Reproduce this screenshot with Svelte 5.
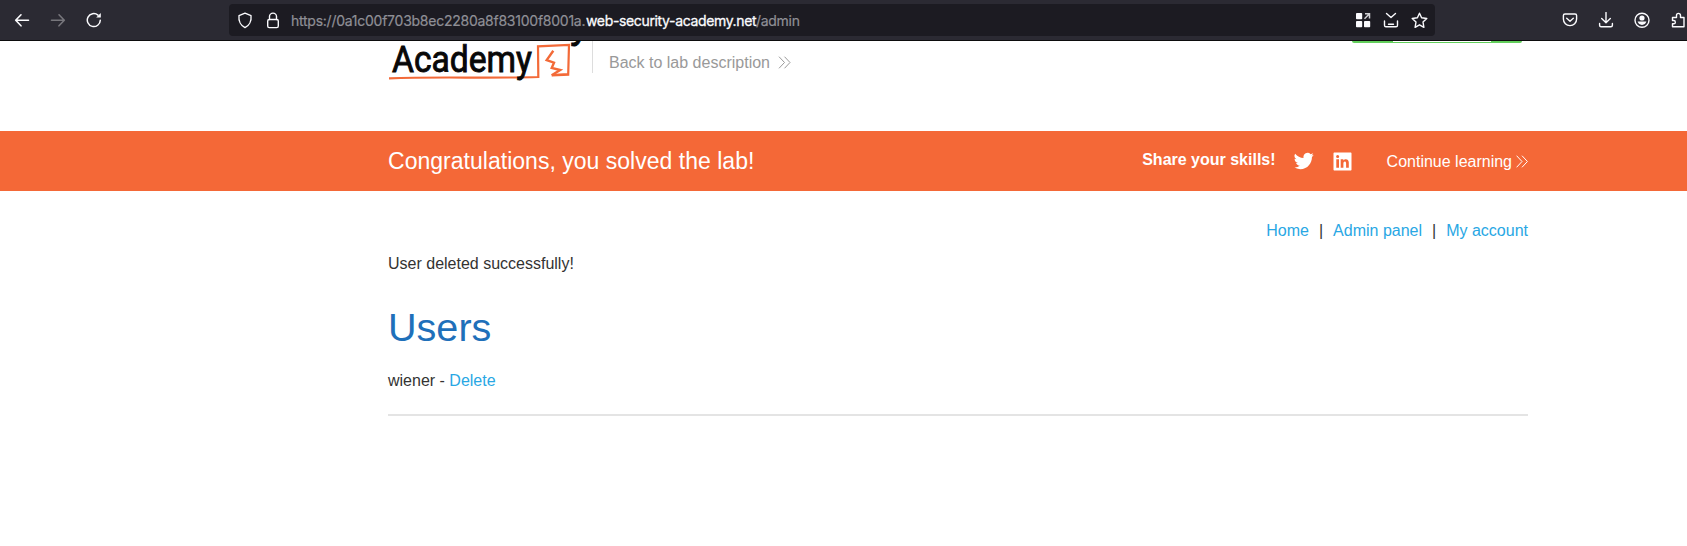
<script>
  const links = ['Home', 'Admin panel', 'My account'];
</script>

<div class="window">
  <header class="toolbar">
    <nav class="history">
      <svg width="16" height="16" viewBox="0 0 16 16" class="line"><path d="M14.5 8.3H2M7 2.8 1.7 8.3 7 13.8" stroke-width="1.6" /></svg>
      <svg width="16" height="16" viewBox="0 0 16 16" class="line dim"><path d="M1.5 8.3H14M9 2.8l5.3 5.5L9 13.8" stroke-width="1.6" /></svg>
      <svg width="16" height="16" viewBox="0 0 16 16" class="line"><path d="M14.3 8.2A6.5 6.5 0 1 1 12 3.1" stroke-width="1.5" /><path d="M14.8 1v4.5h-4.6z" fill="#fbfbfe" stroke="none" /></svg>
    </nav>
    <div class="address">
      <svg width="16" height="17" viewBox="0 0 16 17" class="line shield"><path d="M8 1.2 14 3.6C14.7 9 12 13.6 8 15.6 4 13.6 1.3 9 2 3.6z" /></svg>
      <svg width="14" height="17" viewBox="0 0 14 17" class="line lock"><path d="M3.5 7.5V4.6a3.5 3.5 0 0 1 7 0v2.9" /><rect x="1.7" y="7.5" width="10.6" height="8.1" rx="1.6" /></svg>
      <div class="url"><span class="host">https://0a1c00f703b8ec2280a8f83100f8001a.</span><span class="domain">web-security-academy.net</span><span class="path">/admin</span></div>
      <div class="actions">
        <svg width="16" height="16" viewBox="0 0 16 16" fill="#fbfbfe"><rect x="1" y="1" width="6.2" height="6.2" rx=".8" /><rect x="1" y="9" width="6.2" height="6.2" rx=".8" /><rect x="9" y="9" width="6.2" height="6.2" rx=".8" /><path d="M9.500 6.800 14 2.300M10 1.800h4.500v4.800" fill="none" stroke="#d0d0d4" stroke-width="1.5" /></svg>
        <svg width="16" height="16" viewBox="0 0 16 16" class="line"><path d="m3.500 1.500 4.500 4 4.500-4M1.500 9v4.200c0 .9.600 1.600 1.500 1.600h10c.9 0 1.500-.7 1.500-1.600V9M5.500 12.200h5" /></svg>
        <svg width="17" height="17" viewBox="0 0 17 17" class="line"><path d="m8.500 1.200 2.100 4.600 5.200.7-3.800 3.500.9 5.300-4.400-2.500-4.400 2.500.9-5.300L1.200 6.500l5.200-.7z" /></svg>
      </div>
    </div>
    <div class="tools">
      <svg width="16" height="16" viewBox="0 0 16 16" class="line"><path d="M3 2h10c1 0 1.600.6 1.600 1.600V7c0 4-2.900 6.600-6.600 6.600S1.400 11 1.400 7V3.600C1.400 2.600 2 2 3 2zM4.700 6.300 8 9.300l3.300-3" /></svg>
      <svg width="16" height="16" viewBox="0 0 16 16" class="line"><path d="M8 .5v10M3.700 6.400 8 10.700l4.300-4.300M1.600 11.500v1.700c0 .9.600 1.500 1.500 1.500h9.800c.9 0 1.500-.6 1.500-1.500v-1.700" /></svg>
      <svg width="16" height="16" viewBox="0 0 16 16" class="line"><circle cx="8" cy="8.200" r="7" /><circle cx="8" cy="6" r="2.600" fill="#fbfbfe" stroke="none" /><path d="M3.600 9.600h8.800c-.5 2-2.200 3.300-4.400 3.300S4.100 11.600 3.600 9.600z" fill="#fbfbfe" stroke="none" /></svg>
      <svg width="16" height="16" viewBox="0 0 16 16" class="line"><path d="M2.500 14.800h11.500V5.500H10.500V3.400a2 2 0 0 0-4 0v2.100H2.500v3h1.200a1.600 1.600 0 0 1 0 3.300H2.500z" /></svg>
    </div>
  </header>

  <section class="lab">
    <div class="container lab-inner">
      <svg class="logo" width="204" height="42" viewBox="0 0 204 42">
        <text x="182" y="-3" textLength="19" lengthAdjust="spacingAndGlyphs">y</text>
        <path d="M1 37.300c48-1.800 98 .2 149.300-1.300L150 5.300l31-1.300-.8 29.700-16.500.8M163.700 34.200l16-1.200" fill="none" stroke="#f36a38" stroke-width="2.200" />
        <path d="m165.300 9.700-6.600 9.400 7.300 2.500-2.300 5.400 8.500 2-8.500 5.300" fill="none" stroke="#f36a38" stroke-width="2.400" />
        <text x="4" y="30.500" textLength="140" lengthAdjust="spacingAndGlyphs">Academy</text>
      </svg>
      <div class="back"><span>Back to lab description</span>
        <svg width="13" height="13" viewBox="0 0 13 13"><path d="m1 .7 5.500 5.800L1 12.300M6.500.7 12 6.500l-5.500 5.800" /></svg>
      </div>
      <div class="status"><i></i></div>
    </div>
  </section>

  <section class="banner">
    <div class="container banner-inner">
      <h4>Congratulations, you solved the lab!</h4>
      <div class="share">
        <b>Share your skills!</b>
        <svg class="twitter" width="20" height="20" viewBox="0 0 24 24"><path fill="#fff" d="M23.600 4.600a9.800 9.800 0 0 1-2.800.8 4.900 4.900 0 0 0 2.200-2.700 9.900 9.900 0 0 1-3.100 1.200 4.900 4.900 0 0 0-8.400 4.500A14 14 0 0 1 1.400 3.200a4.900 4.900 0 0 0 1.500 6.600 4.900 4.900 0 0 1-2.200-.6v.1a4.900 4.900 0 0 0 3.900 4.800 4.900 4.900 0 0 1-2.200.1 4.900 4.900 0 0 0 4.600 3.400A9.900 9.900 0 0 1 0 19.600a14 14 0 0 0 7.500 2.200c9.100 0 14-7.500 14-14v-.6a10 10 0 0 0 2.100-2.600z" /></svg>
        <svg class="linkedin" width="19" height="19" viewBox="0 0 19 19"><path fill="#fff" fill-rule="evenodd" d="M1.500.5h16c.7 0 1 .4 1 1v16c0 .7-.3 1-1 1h-16c-.6 0-1-.3-1-1v-16c0-.6.4-1 1-1zM3.300 7.300v8.500H6V7.300zM4.600 3a1.500 1.500 0 1 0 .1 3.100A1.500 1.500 0 0 0 4.600 3zM7.700 7.300v8.500h2.700v-4.300c0-2.600 2.700-2.700 2.700-.1v4.400h2.700v-5.200c0-4-3.900-4.300-5.400-2.100V7.300z" /></svg>
        <span class="continue"><span>Continue learning</span>
          <svg width="12" height="13" viewBox="0 0 12 13"><path d="M.6.7 6 6.500.6 12.300M6 .7l5.400 5.800L6 12.300" /></svg>
        </span>
      </div>
    </div>
  </section>

  <main class="container">
    <nav class="account">
      {#each links as link, i}
        {#if i}<span>|</span>{/if}<a href="#top">{link}</a>
      {/each}
    </nav>
    <p class="notice">User deleted successfully!</p>
    <h1>Users</h1>
    <p class="user">wiener - <a href="#delete">Delete</a></p>
    <hr />
  </main>
</div>

<style>
  :global(body) { margin: 0; background: #fff; }
  .window { height: 546px; overflow: hidden; font: 16px/20px "Liberation Sans", Arial, sans-serif; color: #333332; }
  svg { display: block; flex: none; }
  a { color: #29a7e4; text-decoration: none; }
  .toolbar { box-sizing: border-box; height: 41px; display: flex; align-items: center; background: #2b2a33; border-bottom: 1px solid #0c0c0d; }
  .line { fill: none; stroke: #fbfbfe; stroke-width: 1.4; stroke-linecap: round; stroke-linejoin: round; }
  .dim { stroke: #77767c; }
  .history { width: 229px; box-sizing: border-box; padding-left: 14px; display: flex; gap: 20px; }
  .address { box-sizing: border-box; width: 1206px; height: 32px; background: #1c1b22; border-radius: 4px; display: flex; align-items: center; padding: 0 7px 0 8px; }
  .lock { margin-left: 13px; }
  .url { display: flex; margin-left: 11px; padding-top: 2px; font: 14px/20px Inter, sans-serif; color: #8f8f96; white-space: nowrap; }
  .host { width: 295px; letter-spacing: -.25px; -webkit-text-stroke: .2px #8f8f96; }
  .domain { width: 170px; color: #fbfbfe; letter-spacing: -.35px; -webkit-text-stroke: .3px #fbfbfe; }
  .path { letter-spacing: -.3px; -webkit-text-stroke: .2px #8f8f96; }
  .actions { display: flex; align-items: center; gap: 12px; margin-left: auto; }
  .tools { margin-left: 127px; display: flex; gap: 20px; width: 125px; overflow: hidden; }
  .container { width: 1140px; margin-left: 388px; }
  .lab { height: 90px; }
  .lab-inner { display: flex; align-items: flex-start; }
  .logo { width: 204px; overflow: hidden; }
  .logo text { font: 400 37px Roboto, sans-serif; fill: #080808; stroke: #080808; stroke-width: .9px; }
  .back { display: flex; align-items: center; box-sizing: border-box; height: 32px; border-left: 1px solid #ddd; padding: 12px 0 0 16px; color: #999; gap: 8px; }
  .back svg { stroke: #999; fill: none; margin-top: -1px; }
  .status { margin-left: auto; width: 170px; margin-right: 6px; height: 2px; background: #62ce5b; border-radius: 0 0 14px 14px; }
  .status i { display: block; width: 98px; height: 1px; margin-left: 41px; background: #fff; }
  .banner { height: 60px; background: #f46837; color: #fff; }
  .banner-inner { display: flex; height: 60px; align-items: center; justify-content: space-between; }
  h4 { font-size: 23px; font-weight: 400; line-height: 30px; letter-spacing: .02px; margin: 0; }
  .share { display: flex; align-items: center; }
  b { margin-top: -2px; }
  .twitter { margin-left: 18px; }
  .linkedin { margin-left: 19px; }
  .continue { display: flex; align-items: center; gap: 4px; margin-left: 35px; }
  .continue span { padding-top: 2px; }
  .continue svg { fill: none; stroke: #fff; }
  .account { display: flex; justify-content: flex-end; gap: 10px; padding-top: 30px; }
  p, h1 { margin: 0; }
  .notice { padding-top: 13px; }
  h1 { color: #1f70ba; font-size: 39.6px; font-weight: 400; line-height: 46px; margin-top: 30px; }
  .user { margin-top: 21px; }
  hr { border: 0; height: 2px; margin: 23px 0 0; background: #e4e4e4; }
</style>
